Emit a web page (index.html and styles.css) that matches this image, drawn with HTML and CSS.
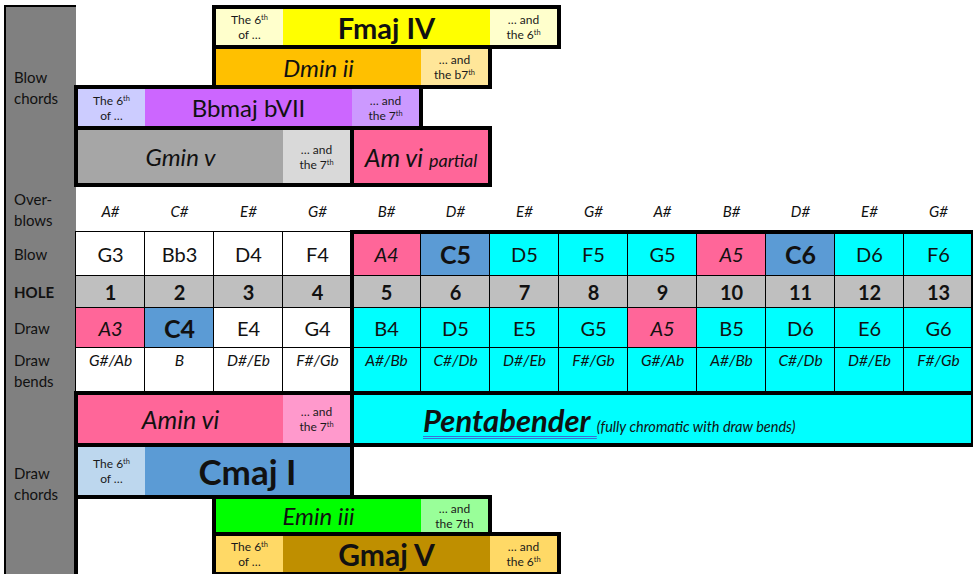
FILE: index.html
```html
<!DOCTYPE html>
<html>
<head>
<meta charset="utf-8">
<link rel="stylesheet" href="styles.css">
</head>
<body>
<div class="sheet">
  <div class="side"></div>
  <div class="label l-blowchords">Blow<br>chords</div>
  <div class="label l-over">Over-<br>blows</div>
  <div class="label l-blow">Blow</div>
  <div class="label l-hole">HOLE</div>
  <div class="label l-draw">Draw</div>
  <div class="label l-bends">Draw<br>bends</div>
  <div class="label l-drawchords">Draw<br>chords</div>

  <div class="box fmaj">
    <div class="note bg-lyellow"><span>The 6<sup>th</sup><br>of …</span></div>
    <div class="main bg-yellow bold28">Fmaj IV</div>
    <div class="note bg-lyellow"><span>… and<br>the 6<sup>th</sup></span></div>
  </div>
  <div class="box dmin">
    <div class="main bg-orange it24">Dmin ii</div>
    <div class="note bg-lorange"><span>… and<br>the b7<sup>th</sup></span></div>
  </div>
  <div class="box bbmaj">
    <div class="note bg-lavender"><span>The 6<sup>th</sup><br>of …</span></div>
    <div class="main bg-purple reg24">Bbmaj bVII</div>
    <div class="note bg-lpurple"><span>… and<br>the 7<sup>th</sup></span></div>
  </div>
  <div class="box gmin">
    <div class="main bg-gray it24">Gmin v</div>
    <div class="note bg-lgray"><span>… and<br>the 7<sup>th</sup></span></div>
  </div>
  <div class="box amvi">
    <div class="main bg-pink it25"><span>Am vi <span class="partial">partial</span></span></div>
  </div>

  <div class="table">
    <div class="ob">A#</div><div class="ob">C#</div><div class="ob">E#</div><div class="ob">G#</div><div class="ob">B#</div><div class="ob">D#</div><div class="ob">E#</div><div class="ob">G#</div><div class="ob">A#</div><div class="ob">B#</div><div class="ob">D#</div><div class="ob">E#</div><div class="ob">G#</div>

    <div class="c n l t">G3</div><div class="c n t">Bb3</div><div class="c n t">D4</div><div class="c n t">F4</div>
    <div class="c n bg-pink it">A4</div><div class="c n bg-blue bn">C5</div><div class="c n bg-cyan">D5</div><div class="c n bg-cyan">F5</div><div class="c n bg-cyan">G5</div>
    <div class="c n bg-pink it">A5</div><div class="c n bg-blue bn">C6</div><div class="c n bg-cyan">D6</div><div class="c n bg-cyan">F6</div>

    <div class="c h l">1</div><div class="c h">2</div><div class="c h">3</div><div class="c h">4</div><div class="c h">5</div><div class="c h">6</div><div class="c h">7</div><div class="c h">8</div><div class="c h">9</div><div class="c h">10</div><div class="c h">11</div><div class="c h">12</div><div class="c h">13</div>

    <div class="c n l bg-pink it">A3</div><div class="c n bg-blue bn">C4</div><div class="c n">E4</div><div class="c n">G4</div>
    <div class="c n bg-cyan">B4</div><div class="c n bg-cyan">D5</div><div class="c n bg-cyan">E5</div><div class="c n bg-cyan">G5</div><div class="c n bg-pink it">A5</div>
    <div class="c n bg-cyan">B5</div><div class="c n bg-cyan">D6</div><div class="c n bg-cyan">E6</div><div class="c n bg-cyan">G6</div>

    <div class="c b l">G#/Ab</div><div class="c b">B</div><div class="c b">D#/Eb</div><div class="c b">F#/Gb</div>
    <div class="c b bg-cyan">A#/Bb</div><div class="c b bg-cyan">C#/Db</div><div class="c b bg-cyan">D#/Eb</div><div class="c b bg-cyan">F#/Gb</div><div class="c b bg-cyan">G#/Ab</div>
    <div class="c b bg-cyan">A#/Bb</div><div class="c b bg-cyan">C#/Db</div><div class="c b bg-cyan">D#/Eb</div><div class="c b bg-cyan">F#/Gb</div>
  </div>
  <div class="thick"></div>

  <div class="box amin">
    <div class="main bg-pink it25">Amin vi</div>
    <div class="note bg-lpink"><span>… and<br>the 7<sup>th</sup></span></div>
  </div>
  <div class="box penta">
    <div class="main bg-cyan pmain"><span><span class="pb">Pentabender&nbsp;</span><span class="pbsub">(fully chromatic with draw bends)</span></span></div>
  </div>
  <div class="box cmaj">
    <div class="note bg-lblue"><span>The 6<sup>th</sup><br>of …</span></div>
    <div class="main bg-blue bold35">Cmaj I</div>
  </div>
  <div class="box emin">
    <div class="main bg-green it24">Emin iii</div>
    <div class="note bg-lgreen"><span>… and<br>the 7th</span></div>
  </div>
  <div class="box gmaj">
    <div class="note bg-lgold"><span>The 6<sup>th</sup><br>of …</span></div>
    <div class="main bg-gold bold30">Gmaj V</div>
    <div class="note bg-lgold"><span>… and<br>the 6<sup>th</sup></span></div>
  </div>
  <div class="edge"></div>
</div>
</body>
</html>
```

FILE: styles.css
```css
html, body {
  margin: 0;
  padding: 0;
  background: #fff;
  overflow: hidden;
}

body {
  font-family: Lato, "Open Sans", sans-serif;
  color: #111;
}

.sheet {
  display: grid;
  grid-template-columns: 70px repeat(13, 69px);
  grid-template-rows: 40px 40px 41px 57px 47px 44px 32px 40px 45px 52px 52px 37px 40px;
  margin: 7px 0 0 6px;
  width: 967px;
}

.side {
  grid-column: 1;
  grid-row: 1 / 14;
  background: #808080;
  margin: -2px 0 -2px -2px;
  border-left: 2px solid #000;
  border-top: 2px solid #000;
  border-bottom: 2px solid #000;
}

.edge {
  grid-column: 1;
  grid-row: 12 / 14;
  justify-self: end;
  width: 4px;
  margin-right: -2px;
  margin-bottom: -2px;
  background: #000;
}

.label {
  grid-column: 1;
  align-self: center;
  padding-left: 8px;
  font-size: 15px;
  line-height: 21px;
  color: #111;
}

.l-blowchords { grid-row: 2 / 4; }
.l-over { grid-row: 5; padding-top: 2px; }
.l-blow { grid-row: 6; }
.l-hole { grid-row: 7; font-weight: 700; }
.l-draw { grid-row: 8; }
.l-bends { grid-row: 9; }
.l-drawchords { grid-row: 10 / 14; }

/* chord boxes */
.box {
  display: flex;
  border: 2px solid #000;
  outline: 2px solid #000;
  min-width: 0;
}

.fmaj  { grid-column: 4 / 9;  grid-row: 1; }
.dmin  { grid-column: 4 / 8;  grid-row: 2; }
.bbmaj { grid-column: 2 / 7;  grid-row: 3; }
.gmin  { grid-column: 2 / 6;  grid-row: 4; }
.amvi  { grid-column: 6 / 8;  grid-row: 4; }
.amin  { grid-column: 2 / 6;  grid-row: 10; }
.penta { grid-column: 6 / 15; grid-row: 10; }
.cmaj  { grid-column: 2 / 6;  grid-row: 11; }
.emin  { grid-column: 4 / 8;  grid-row: 12; }
.gmaj  { grid-column: 4 / 9;  grid-row: 13; }

.note {
  flex: 0 0 67px;
  display: flex;
  align-items: center;
  justify-content: center;
  text-align: center;
  font-size: 12px;
  line-height: 15px;
  color: #1a1a1a;
}

.main {
  flex: 1;
  display: flex;
  align-items: center;
  justify-content: center;
  white-space: nowrap;
}

sup {
  font-size: 0.62em;
  line-height: 0;
  vertical-align: 0.5em;
}

.bold28 { font-size: 29px; font-weight: 700; }
.bold30 { font-size: 30px; font-weight: 700; }
.bold35 { font-size: 35px; font-weight: 700; }
.reg24 { font-size: 24px; }
.it24 { font-size: 24px; font-style: italic; }
.it25 { font-size: 25px; font-style: italic; }
.partial { font-size: 18px; }

.pmain {
  justify-content: flex-start;
  padding-left: 69px;
  padding-top: 2px;
}

.pb {
  font-size: 31px;
  font-weight: 700;
  font-style: italic;
  text-decoration: underline double #3b6fd6;
  text-decoration-thickness: 1px;
  text-underline-offset: 4px;
}

.pbsub {
  font-size: 14.5px;
  font-style: italic;
}

/* colours */
.bg-yellow { background: #ffff00; }
.bg-lyellow { background: #ffffcc; }
.bg-orange { background: #ffc000; }
.bg-lorange { background: #ffe699; }
.bg-purple { background: #cc66ff; }
.bg-lpurple { background: #cc99ff; }
.bg-lavender { background: #ccccff; }
.bg-gray { background: #a6a6a6; }
.bg-lgray { background: #d9d9d9; }
.bg-pink { background: #ff6699; }
.bg-lpink { background: #ff99cc; }
.bg-cyan { background: #00ffff; }
.bg-blue { background: #5b9bd5; }
.bg-lblue { background: #bdd7ee; }
.bg-green { background: #00ff00; }
.bg-lgreen { background: #99ff99; }
.bg-gold { background: #bf8f00; }
.bg-lgold { background: #ffd966; }

/* harmonica table */
.table {
  grid-column: 2 / 15;
  grid-row: 5 / 10;
  display: grid;
  grid-template-columns: repeat(13, 69px);
  grid-template-rows: 47px 44px 32px 40px 45px;
}

.ob {
  display: flex;
  align-items: center;
  justify-content: center;
  font-size: 15px;
  font-style: italic;
  padding-top: 4px;
}

.c {
  display: flex;
  align-items: center;
  justify-content: center;
  box-shadow: inset -1px -1px 0 #000;
}

.c.l { box-shadow: inset -1px -1px 0 #000, -1px 0 0 #000; }
.c.t { box-shadow: inset -1px -1px 0 #000, 0 -1px 0 #000; }
.c.l.t { box-shadow: inset -1px -1px 0 #000, -1px 0 0 #000, 0 -1px 0 #000, -1px -1px 0 #000; }

.n { font-size: 20px; }
.n.it { font-style: italic; }
.n.bn { font-size: 25px; font-weight: 700; }

.h {
  background: #bfbfbf;
  font-size: 20px;
  font-weight: 700;
}

.b {
  align-items: flex-start;
  padding-top: 3px;
  font-size: 15.5px;
  font-style: italic;
}

.thick {
  grid-column: 6 / 15;
  grid-row: 6 / 10;
  border: 2px solid #000;
  outline: 2px solid #000;
}
```
